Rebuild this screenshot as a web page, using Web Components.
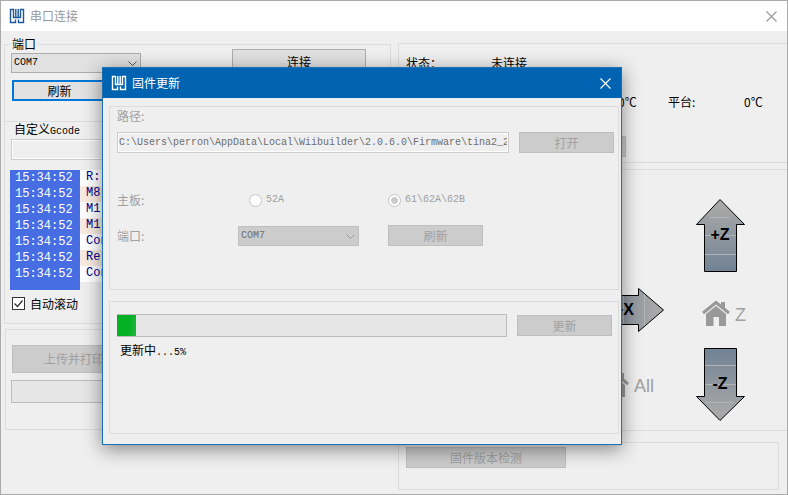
<!DOCTYPE html>
<html lang="zh-CN">
<head>
<meta charset="utf-8">
<meta name="viewport" content="width=device-width, initial-scale=1">
<title>串口连接</title>
<style>
  body {
    margin: 0;
    background: #efefef;
    color: #000;
    font: 12px/16px "Noto Sans CJK SC", "Liberation Sans", sans-serif;
    --face: #efefef;
    --line: #dcdcdc;
    --muted: #a0a0a0;
    --mono: "Liberation Mono", "Noto Sans CJK SC", monospace;
  }
</style>
</head>
<body>
<serial-app></serial-app>

<script>
// Attaches an open shadow root and fills it from the class's render()
class BaseElement extends HTMLElement {
  constructor() {
    super();
    this.attachShadow({ mode: 'open' });
  }

  connectedCallback() {
    this.shadowRoot.innerHTML = `<style>* { box-sizing: border-box; }</style>` + this.render();
  }
}

class ToolWindow extends BaseElement {
  render() {
    return `
      <style>
        :host {
          display: flex;
          flex-direction: column;
          box-sizing: border-box;
          background: var(--face);
          border: 1px solid #aaa;
          --title-bg: #fff;
          --title-fg: #999;
          --logo: #1d5799;
        }

        :host([active]) {
          border-color: #1a70b5;
          box-shadow: 0 4px 18px rgba(0,0,0,0.45);
          --title-bg: #0063b1;
          --title-fg: #fff;
          --logo: #fff;
        }

        header {
          display: flex;
          align-items: center;
          gap: 5px;
          height: 30px;
          flex-shrink: 0;
          padding: 0 9px 0 8px;
          background: var(--title-bg);
          color: var(--title-fg);
        }

        h1 { margin: 0; flex: 1; font-size: 12px; font-weight: 400; line-height: 16px; }

        .logo { fill: none; stroke: var(--logo); stroke-width: 1.4; }

        button {
          display: flex;
          padding: 0;
          border: 0;
          background: none;
          color: inherit;
        }

        button svg { fill: none; stroke: currentColor; stroke-width: 1.2; }
      </style>

      <header>
        <svg class="logo" width="16" height="16" viewBox="0 0 16 16">
          <path d="M4.500 8V1.500H1.500V14.500H6.500V11.500M11.500 8V1.500H14.500V14.500H9.500V11.500M4.500 7V9.500H11.500V7M6.800 1V9.500M9.200 1V9.500"/>
        </svg>
        <h1>${this.getAttribute('heading')}</h1>
        <button type="button">
          <svg width="13" height="13" viewBox="0 0 13 13"><path d="M1.5 1.5l10 10M11.5 1.5l-10 10"/></svg>
        </button>
      </header>
      <slot></slot>
    `;
  }
}

class GroupBox extends BaseElement {
  render() {
    const legend = this.getAttribute('legend');
    return `
      <style>
        :host { display: block; --pad: 0; }

        fieldset {
          margin: 0;
          min-width: 0;
          padding: var(--pad);
          border: 1px solid var(--line);
          border-width: var(--edges, 1px);
        }

        legend { margin-left: -1px; padding: 0 2px; line-height: 10px; }
      </style>
      <fieldset>
        ${legend ? `<legend>${legend}</legend>` : ''}
        <slot></slot>
      </fieldset>
    `;
  }
}

class PushButton extends BaseElement {
  render() {
    return `
      <style>
        :host { display: block; width: 95px; height: 21px; }

        button {
          display: block;
          width: 100%;
          height: 100%;
          padding: 0;
          font: inherit;
          color: #000;
          background: #e1e1e1;
          border: 1px solid #adadad;
        }

        button:disabled { color: var(--muted); background: #ccc; border-color: #bfbfbf; }
        :host([focused]) button { border: 2px solid #0078d7; }
      </style>
      <button type="button" ${this.hasAttribute('disabled') ? 'disabled' : ''}><slot></slot></button>
    `;
  }
}

class ComboBox extends BaseElement {
  render() {
    return `
      <style>
        :host { display: flex; align-items: center; }

        label { color: var(--muted); width: var(--label-width); }

        .box { position: relative; flex: 1; }

        select {
          display: block;
          width: 100%;
          height: 20px;
          padding: 0 2px;
          appearance: none;
          color: #000;
          font: 10px/16px var(--mono);
          background: #e1e1e1;
          border: 1px solid #adadad;
          border-radius: 0;
          opacity: 1;
        }

        select:disabled { background: #ccc; border-color: #bfbfbf; color: #6d6d6d; }

        svg {
          position: absolute;
          right: 4px;
          top: 7px;
          fill: none;
          stroke: #555;
          pointer-events: none;
        }

        select:disabled + svg { stroke: #999; }
      </style>
      <label for="port"><slot></slot></label>
      <div class="box">
        <select id="port" ${this.hasAttribute('disabled') ? 'disabled' : ''}>
          <option>${this.getAttribute('value')}</option>
        </select>
        <svg width="9" height="7" viewBox="0 0 9 7"><path d="M.5 1.5l4 4 4-4"/></svg>
      </div>
    `;
  }
}

class TextField extends BaseElement {
  render() {
    return `
      <style>
        :host { display: block; }

        label { display: block; line-height: 14px; margin-bottom: var(--gap, 2px); }
        :host([disabled]) label { color: var(--muted); }

        .row { display: flex; gap: 10px; }

        input {
          flex: 1;
          min-width: 0;
          height: 21px;
          padding: 0 1px;
          color: #6d6d6d;
          font: 10px/16px var(--mono);
          background: var(--face);
          border: 1px solid #ccc;
          box-shadow: inset 0 0 0 1px #fff;
        }
      </style>
      <label for="field"><slot></slot></label>
      <div class="row">
        <input id="field" type="text" value="${this.getAttribute('value') || ''}" ${this.hasAttribute('disabled') ? 'disabled' : ''}>
        <slot name="action"></slot>
      </div>
    `;
  }
}

class RadioOption extends BaseElement {
  render() {
    return `
      <style>
        :host { display: block; color: var(--muted); }

        label { display: flex; align-items: center; gap: 4px; font: 10px/16px var(--mono); }

        input {
          appearance: none;
          margin: 0;
          width: 13px;
          height: 13px;
          border: 1px solid #c3c3c3;
          border-radius: 50%;
          background: #fff;
        }

        input:checked { background: radial-gradient(#ccc 3px, #fff 4px); }
      </style>
      <label>
        <input type="radio" disabled ${this.hasAttribute('checked') ? 'checked' : ''}>
        <slot></slot>
      </label>
    `;
  }
}

class CheckOption extends BaseElement {
  render() {
    return `
      <style>
        :host { display: block; }

        label { display: flex; align-items: center; gap: 5px; line-height: 13px; }

        input {
          appearance: none;
          margin: 0;
          width: 13px;
          height: 13px;
          border: 1px solid #333;
          background: #fff;
        }

        input:checked {
          background: #fff url("data:image/svg+xml,%3Csvg xmlns='http://www.w3.org/2000/svg' viewBox='0 0 11 11'%3E%3Cpath fill='none' stroke='%23333' stroke-width='1.3' d='M1.5 5.5l3 3 5-6'/%3E%3C/svg%3E");
        }
      </style>
      <label><input type="checkbox" checked><slot></slot></label>
    `;
  }
}

class ProgressMeter extends BaseElement {
  render() {
    return `
      <style>
        :host { display: block; height: 23px; }

        progress {
          display: block;
          width: 100%;
          height: 100%;
          appearance: none;
          border: 1px solid #bcbcbc;
          background: #e6e6e6;
        }

        :host([value]) progress { border-left-width: 0; }

        progress::-webkit-progress-bar { background: #e6e6e6; }
        progress::-webkit-progress-value { background: linear-gradient(100deg, #06b025 60%, #1fb83a); }
      </style>
      <progress max="100" value="${this.getAttribute('value') || 0}"></progress>
    `;
  }
}

class SerialLog extends BaseElement {
  render() {
    const lines = ['R:', 'M8', 'M1', 'M1', 'Con', 'Re', 'Con'];
    const rows = lines.map(text => `<li><time>15:34:52</time><code>${text}</code></li>`).join('');
    return `
      <style>
        :host {
          display: block;
          padding-bottom: 8px;
          background: linear-gradient(90deg, #466ee2 70px, transparent 70px);
        }

        ol {
          margin: 0;
          padding: 0;
          list-style: none;
          font: 12px/16px "Liberation Mono", monospace;
        }

        li { display: grid; grid-template-columns: 70px 1fr; }
        time { padding-left: 5px; color: #fff; }
        code { padding-left: 6px; font: inherit; line-height: 14px; color: #00008b; background: #fff; }
        li:nth-child(even) code { background: #faebdf; }
      </style>
      <ol>${rows}</ol>
    `;
  }
}

const arrows = {
  up: {
    size: [49, 73],
    shape: 'M24 .5L48.5 25.5H40.5V72.5H8.5V25.5H.5Z',
    lines: 'M14 18.5H34M9 36.5H40M9 55.5H40',
    gradient: 'x1="0" y1="0" x2="0" y2="1"',
    text: [24, 41],
  },
  down: {
    size: [49, 73],
    shape: 'M24 72.5L48.5 48.5H40.5V.5H8.5V48.5H.5Z',
    lines: 'M9 17.5H40M9 36.5H40M10 54.5H38',
    gradient: 'x1="0" y1="1" x2="0" y2="0"',
    text: [24, 41],
  },
  right: {
    size: [73, 44],
    shape: 'M72.5 22L47.5 .5V7.5H.5V36.5H47.5V43.5Z',
    lines: 'M32.5 8V36M53.5 6V38',
    gradient: 'x1="1" y1="0" x2="0" y2="0"',
    text: [33, 27],
  },
};

class JogButton extends BaseElement {
  render() {
    const a = arrows[this.getAttribute('direction')];
    const [w, h] = a.size;
    return `
      <style>
        :host { display: block; }
        button { display: block; padding: 0; border: 0; background: none; }
        svg { display: block; }
        text { font: bold 16px "Liberation Sans", sans-serif; text-anchor: middle; }
      </style>
      <button type="button">
        <svg width="${w}" height="${h}" viewBox="0 0 ${w} ${h}">
          <linearGradient id="fill" ${a.gradient}>
            <stop offset="0.1" stop-color="#a8a8a8"/>
            <stop offset="1" stop-color="#708294"/>
          </linearGradient>
          <path d="${a.shape}" fill="url(#fill)" stroke="#000"/>
          <path d="${a.lines}" stroke="#b4b4b4"/>
          <text x="${a.text[0]}" y="${a.text[1]}">${this.getAttribute('label')}</text>
        </svg>
      </button>
    `;
  }
}

class HomeButton extends BaseElement {
  render() {
    return `
      <style>
        :host { display: block; }

        button {
          display: flex;
          align-items: center;
          gap: 5px;
          padding: 0;
          border: 0;
          background: none;
          color: var(--muted);
          font: 18px/23px "Liberation Sans", sans-serif;
        }

        span { padding-top: 4px; }
      </style>
      <button type="button">
        <svg width="28" height="27" viewBox="0 0 28 27" fill="#999">
          <path d="M19 2h4v7l-4-4z"/>
          <path d="M1 13L14 2.5 27 13" fill="none" stroke="#999" stroke-width="3"/>
          <path d="M14 6L24 14V26H17V17H11.500V26H4V14Z"/>
        </svg>
        <span><slot></slot></span>
      </button>
    `;
  }
}

class FirmwareDialog extends BaseElement {
  render() {
    return `
      <style>
        :host { display: block; }

        .body { display: flex; flex-direction: column; gap: 11px; padding: 8px 2px 10px 6px; }

        .firmware { --pad: 2px 4px 43px 7px; }
        .firmware text-field { --gap: 9px; }

        .options {
          display: grid;
          grid-template-columns: 121px 150px 1fr;
          align-items: center;
          row-gap: 17px;
          margin-top: 39px;
          color: var(--muted);
        }

        .options combo-box { grid-column: 1 / 3; --label-width: 121px; margin-right: 29px; }
        .options radio-option:nth-of-type(1) { margin-left: 11px; }

        .update { --pad: 12px 6px 75px 7px; }
        .row { display: flex; align-items: center; gap: 10px; }
        .row progress-meter { flex: 1; }
        p { margin: 5px 3px 0; }
        .latin { font: 10px/10px var(--mono); }
      </style>

      <tool-window heading="固件更新" active role="dialog">
        <div class="body">
          <group-box class="firmware">
            <text-field disabled value="C:\\Users\\perron\\AppData\\Local\\Wiibuilder\\2.0.6.0\\Firmware\\tina2_2">
              路径:
              <push-button slot="action" disabled>打开</push-button>
            </text-field>
            <div class="options">
              <span>主板:</span>
              <radio-option>52A</radio-option>
              <radio-option checked>61\\62A\\62B</radio-option>
              <combo-box disabled value="COM7">端口:</combo-box>
              <push-button disabled>刷新</push-button>
            </div>
          </group-box>

          <group-box class="update">
            <div class="row">
              <progress-meter value="5"></progress-meter>
              <push-button disabled>更新</push-button>
            </div>
            <p>更新中<span class="latin">...5%</span></p>
          </group-box>
        </div>
      </tool-window>
    `;
  }
}

class SerialApp extends BaseElement {
  render() {
    return `
      <style>
        :host { display: block; position: relative; }

        .main { min-height: 100vh; }

        .columns {
          display: grid;
          grid-template-columns: 1fr 1fr;
          gap: 5px;
          padding-left: 3px;
        }

        .left, .right { display: flex; flex-direction: column; min-width: 0; }
        .left { padding: 8px 2px 0 0; }
        .right { padding-top: 12px; }

        .port { --pad: 4px 24px 20px 6px; }
        .port-grid {
          display: grid;
          grid-template-columns: 130px 134px;
          justify-content: space-between;
          row-gap: 7px;
        }
        .connect { width: 100%; height: 26px; margin: -4px 0 -2px; }
        .port-grid > * { grid-row: 1; }
        .port-grid .refresh { grid-row: 2; margin-left: 1px; }

        .console { --edges: 0 1px 1px; --pad: 0 6px 13px; }
        .console .caption { padding-left: 3px; }
        .latin { font: 10px/10px var(--mono); }
        serial-log { margin: 10px 0 7px -1px; }
        check-option { margin-left: 1px; }

        .upload { --pad: 15px 6px 26px 5px; margin: 5px 0 0 1px; }
        .upload push-button { width: 124px; height: 28px; margin: 0 0 7px 1px; }

        .status { --edges: 1px 0 1px 1px; --pad: 10px 0 5px 7px; }
        .readings {
          display: grid;
          grid-template-columns: 85px 127px 50px 76px 1fr;
          row-gap: 21px;
          line-height: 18px;
          margin-bottom: 25px;
        }
        .temp { grid-column: 3; }
        .status push-button { margin-left: 125px; }

        .jog { --edges: 1px 0 1px 1px; --pad: 29px 41px 9px 0; margin-top: 6px; }
        .pad {
          display: grid;
          grid-template-columns: auto 50px;
          column-gap: 32px;
          row-gap: 16px;
          justify-content: end;
        }
        .up, .down { grid-column: 2; }
        .home-z { padding: 12px 0 0 6px; height: 32px; }
        .home-all { align-self: center; justify-self: end; margin-right: 10px; }

        .check { --pad: 4px 7px 21px; margin: 11px 8px 0 0; }
        .check push-button { width: 160px; }

        firmware-dialog { position: absolute; left: 102px; top: 67px; width: 520px; }
      </style>

      <tool-window class="main" heading="串口连接">
        <div class="columns">
          <div class="left">
            <group-box class="port" legend="端口">
              <div class="port-grid">
                <combo-box value="COM7"></combo-box>
                <push-button class="connect">连接</push-button>
                <push-button class="refresh" focused>刷新</push-button>
              </div>
            </group-box>

            <group-box class="console">
              <text-field><span class="caption">自定义<span class="latin">Gcode</span></span></text-field>
              <serial-log></serial-log>
              <check-option>自动滚动</check-option>
            </group-box>

            <group-box class="upload">
              <push-button disabled>上传并打印</push-button>
              <progress-meter></progress-meter>
            </group-box>
          </div>

          <div class="right">
            <group-box class="status">
              <div class="readings">
                <span>状态：</span>
                <span>未连接</span>
                <span></span><span></span><span></span>
                <span class="temp">0℃</span>
                <span>平台:</span>
                <span>0℃</span>
              </div>
              <push-button disabled></push-button>
            </group-box>

            <group-box class="jog">
              <div class="pad">
                <jog-button class="up" direction="up" label="+Z"></jog-button>
                <jog-button direction="right" label="+X"></jog-button>
                <home-button class="home-z">Z</home-button>
                <home-button class="home-all">All</home-button>
                <jog-button class="down" direction="down" label="-Z"></jog-button>
              </div>
            </group-box>

            <group-box class="check">
              <push-button disabled>固件版本检测</push-button>
            </group-box>
          </div>
        </div>
      </tool-window>

      <firmware-dialog></firmware-dialog>
    `;
  }
}

customElements.define('tool-window', ToolWindow);
customElements.define('group-box', GroupBox);
customElements.define('push-button', PushButton);
customElements.define('combo-box', ComboBox);
customElements.define('text-field', TextField);
customElements.define('radio-option', RadioOption);
customElements.define('check-option', CheckOption);
customElements.define('progress-meter', ProgressMeter);
customElements.define('serial-log', SerialLog);
customElements.define('jog-button', JogButton);
customElements.define('home-button', HomeButton);
customElements.define('firmware-dialog', FirmwareDialog);
customElements.define('serial-app', SerialApp);
</script>
</body>
</html>
